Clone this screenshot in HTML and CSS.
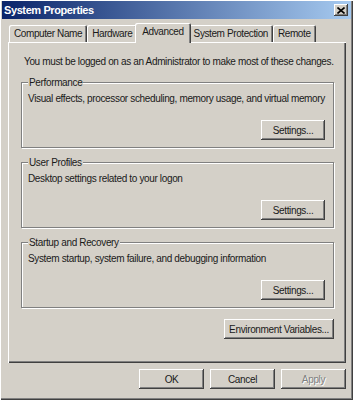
FILE: index.html
```html
<!DOCTYPE html>
<html lang="en">
<head>
    <meta charset="UTF-8">
    <meta name="viewport" content="width=device-width, initial-scale=1.0">
    <title>System Properties</title>
    <link rel="stylesheet" href="styles.css">
</head>
<body>
    <div class="window">
        <div class="titlebar">
            <span class="title">System Properties</span>
            <span class="close-btn">
                <svg width="8" height="7" viewBox="0 0 8 7">
                    <path d="M0.5 0.5L7.5 6.5M7.5 0.5L0.5 6.5" stroke="#000" stroke-width="1.6" fill="none"/>
                </svg>
            </span>
        </div>

        <div class="dialog">
            <ul class="tabs">
                <li class="tab">Computer Name</li>
                <li class="tab">Hardware</li>
                <li class="tab tab-active">Advanced</li>
                <li class="tab">System Protection</li>
                <li class="tab">Remote</li>
            </ul>

            <div class="panel">
                <p class="note">You must be logged on as an Administrator to make most of these changes.</p>

                <fieldset class="group">
                    <legend>Performance</legend>
                    <p class="group-text">Visual effects, processor scheduling, memory usage, and virtual memory</p>
                    <div class="group-actions"><button class="btn">Settings...</button></div>
                </fieldset>

                <fieldset class="group">
                    <legend>User Profiles</legend>
                    <p class="group-text">Desktop settings related to your logon</p>
                    <div class="group-actions"><button class="btn">Settings...</button></div>
                </fieldset>

                <fieldset class="group">
                    <legend>Startup and Recovery</legend>
                    <p class="group-text">System startup, system failure, and debugging information</p>
                    <div class="group-actions"><button class="btn">Settings...</button></div>
                </fieldset>

                <div class="panel-footer">
                    <button class="btn btn-wide">Environment Variables...</button>
                </div>
            </div>

            <div class="dialog-actions">
                <button class="btn">OK</button>
                <button class="btn">Cancel</button>
                <button class="btn" disabled>Apply</button>
            </div>
        </div>
    </div>
</body>
</html>
```

FILE: styles.css
```css
* {
    box-sizing: border-box;
}

body {
    margin: 0;
    font-family: "Liberation Sans", Arial, sans-serif;
    font-size: 10px;
    letter-spacing: -0.35px;
    color: #1a1a1a;
    background-color: #d4d0c8;
}

.window {
    width: 353px;
    height: 400px;
    padding: 1px 2px 2px;
    background-color: #d4d0c8;
    box-shadow: inset 1px 1px #fff, inset -1px -1px #404040, inset -2px -2px #808080;
    display: flex;
    flex-direction: column;
}

.titlebar {
    height: 18px;
    padding: 0 2px;
    display: flex;
    align-items: center;
    justify-content: space-between;
    background: linear-gradient(to right, #0a246a, #a6caf0);
}

.title {
    color: #fff;
    font-weight: bold;
    font-size: 11px;
    letter-spacing: -0.4px;
}

.close-btn {
    width: 14px;
    height: 12px;
    margin-right: 1px;
    display: flex;
    align-items: center;
    justify-content: center;
    background-color: #d4d0c8;
    box-shadow: inset -1px -1px #404040, inset 1px 1px #fff, inset -2px -2px #808080;
}

.dialog {
    flex: 1;
    padding: 4px 5px 0 6px;
    display: flex;
    flex-direction: column;
}

.tabs {
    list-style: none;
    margin: 0;
    padding: 0 0 0 1px;
    height: 19px;
    display: flex;
    align-items: flex-end;
    position: relative;
    z-index: 1;
}

.tab {
    height: 17px;
    padding: 0 5px;
    line-height: 17px;
    letter-spacing: -0.4px;
    background-color: #d4d0c8;
    border-radius: 2px 2px 0 0;
    box-shadow: inset 1px 1px #fff, inset -1px 0 #404040, inset -2px 0 #808080;
    white-space: nowrap;
}

.tab-active {
    height: 20px;
    margin: 0 -2px -1px;
    padding: 0 7px;
    line-height: 18px;
    position: relative;
    z-index: 2;
}

.panel {
    height: 321px;
    padding: 13px 12px 0 13px;
    box-shadow: inset 1px 1px #fff, inset -1px -1px #404040, inset -2px -2px #808080;
}

.note {
    margin: 0;
    padding-left: 3px;
    line-height: 13px;
    white-space: nowrap;
}

.group {
    margin: 8px 0 0;
    padding: 0 8px 7px 5px;
    min-width: 0;
    border: 1px solid #808080;
    box-shadow: 1px 1px #fff, inset 1px 1px #fff;
}

.group legend {
    margin-left: 1px;
    padding: 0 1px;
    line-height: 13px;
    background-color: #d4d0c8;
}

.group-text {
    margin: 3px 0 0 1px;
    line-height: 13px;
    white-space: nowrap;
}

.group-actions {
    margin-top: 15px;
    display: flex;
    justify-content: flex-end;
}

.panel-footer {
    margin-top: 11px;
    display: flex;
    justify-content: flex-end;
}

.btn {
    width: 65px;
    height: 20px;
    padding: 0;
    border: none;
    font: inherit;
    letter-spacing: inherit;
    color: #1a1a1a;
    background-color: #d4d0c8;
    box-shadow: inset -1px -1px #404040, inset 1px 1px #fff, inset -2px -2px #808080;
}

.group .btn {
    width: 64px;
}

.btn-wide {
    width: 110px;
}

.btn:disabled {
    color: #808080;
    text-shadow: 1px 1px #fff;
}

.dialog-actions {
    margin-top: 6px;
    display: flex;
    justify-content: flex-end;
    gap: 6px;
}
```
